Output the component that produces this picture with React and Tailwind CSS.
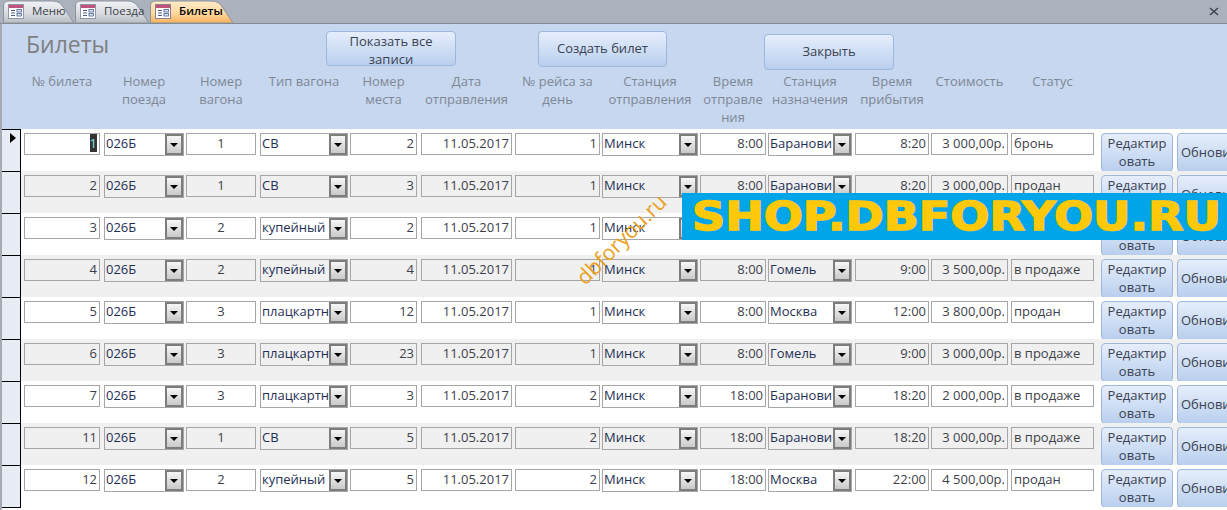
const font = { fontFamily: '"Open Sans", "Noto Sans", sans-serif' };

const rows = [
  ['1', '1', 'СВ', '2', '1', 'Минск', '8:00', 'Барановичи', '8:20', '3 000,00р.', 'бронь'],
  ['2', '1', 'СВ', '3', '1', 'Минск', '8:00', 'Барановичи', '8:20', '3 000,00р.', 'продан'],
  ['3', '2', 'купейный', '2', '1', 'Минск', '8:00', 'Барановичи', '8:20', '3 500,00р.', 'продан'],
  ['4', '2', 'купейный', '4', '1', 'Минск', '8:00', 'Гомель', '9:00', '3 500,00р.', 'в продаже'],
  ['5', '3', 'плацкартный', '12', '1', 'Минск', '8:00', 'Москва', '12:00', '3 800,00р.', 'продан'],
  ['6', '3', 'плацкартный', '23', '1', 'Минск', '8:00', 'Гомель', '9:00', '3 000,00р.', 'в продаже'],
  ['7', '3', 'плацкартный', '3', '2', 'Минск', '18:00', 'Барановичи', '18:20', '2 000,00р.', 'в продаже'],
  ['11', '1', 'СВ', '5', '2', 'Минск', '18:00', 'Барановичи', '18:20', '3 000,00р.', 'в продаже'],
  ['12', '2', 'купейный', '5', '2', 'Минск', '18:00', 'Москва', '22:00', '4 500,00р.', 'продан'],
];

const gridCols = 'grid grid-cols-[80px_82px_74px_90px_71px_94px_87px_98px_68px_87px_76px_80px_90px_76px_72px]';

function FormIcon({ active }) {
  return (
    <svg width="16" height="15" viewBox="0 0 16 15" className="shrink-0">
      <rect x="0.5" y="0.5" width="15" height="14" fill="#fff" stroke={active ? '#8a7f8f' : '#8f98aa'} />
      <rect x="1" y="1" width="14" height="3" fill="#c2527a" />
      <path d="M3 6.5h4M3 9h4M3 11.5h4" stroke="#4a5f8f" />
      <rect x="9" y="5.5" width="4.5" height="2.5" fill="#dfe6f3" stroke="#4a5f8f" strokeWidth="0.8" />
      <rect x="9" y="9.5" width="4.5" height="2.5" fill="#dfe6f3" stroke="#4a5f8f" strokeWidth="0.8" />
    </svg>
  );
}

function Tab({ label, width, active }) {
  const d = `M0.5 23V6Q0.5 1 6 1H${width - 22}Q${width - 15} 1 ${width - 11} 8L${width - 1} 23Z`;
  return (
    <div className="relative h-[23px] flex items-center pl-[5px]" style={{ width }}>
      <svg width={width} height="23" className="absolute left-0 top-0">
        <defs>
          <linearGradient id={'tab' + width} x1="0" y1="0" x2="0" y2="1">
            <stop offset="0" stopColor={active ? '#fdebc8' : '#f0f2f5'} />
            <stop offset="0.55" stopColor={active ? '#fdd9a0' : '#d9dce1'} />
            <stop offset="1" stopColor={active ? '#f8b25a' : '#b9bdc4'} />
          </linearGradient>
        </defs>
        <path d={d} fill={`url(#tab${width})`} stroke="#8d929a" />
      </svg>
      <div className="relative flex items-center gap-[8px] pb-[1px]">
        <FormIcon active={active} />
        <span className={active ? 'text-[11.5px] font-semibold text-black' : 'text-[11.5px] text-[#3b3f46]'}>{label}</span>
      </div>
    </div>
  );
}

function AccessButton({ children, className }) {
  return (
    <div className={`rounded-[4px] border border-[#9db8dc] bg-gradient-to-b from-[#e6eefb] to-[#b9cfee] text-[13px] leading-[18px] text-[#3b4252] text-center flex items-center justify-center shrink-0 ${className}`}>
      {children}
    </div>
  );
}

function Field({ value, width, align, alt, children }) {
  return (
    <div
      style={{ width }}
      className={`h-[22px] border border-[#a6a6a6] ${alt ? 'bg-[#f0f0f0]' : 'bg-white'} ${align} text-[13px] leading-[18px] px-[2px] text-[#3d3f4a] overflow-hidden whitespace-nowrap`}
    >
      {children || value}
    </div>
  );
}

function Combo({ value, width, alt }) {
  return (
    <div
      style={{ width }}
      className={`relative h-[23px] border border-[#a6a6a6] ${alt ? 'bg-[#f0f0f0]' : 'bg-white'} text-[13px] leading-[18px] pl-[1px] text-[#1f2f55] overflow-hidden whitespace-nowrap`}
    >
      {value}
      <div className="absolute right-0 top-0 bottom-0 w-[18px] border-2 border-[#7c7c7c] bg-gradient-to-b from-[#f7f7f7] to-[#c9c9c9] flex items-center justify-center">
        <div className="w-0 h-0 border-l-[4px] border-r-[4px] border-t-[4px] border-l-transparent border-r-transparent border-t-black" />
      </div>
    </div>
  );
}

function Label({ children, width }) {
  return (
    <div style={{ width }} className="text-center text-[13px] leading-[18px] text-[#7f8796]">
      {children}
    </div>
  );
}

function Row({ data, index }) {
  const alt = index % 2 === 1;
  const [id, wagon, type, seat, flight, from, dep, to, arr, cost, status] = data;
  return (
    <div className="flex h-[42px]">
      <div className="relative w-[19px] shrink-0 bg-[#e8edf5] border-t border-r border-black">
        {index === 0 && (
          <div className="absolute left-[8px] top-[3px] w-0 h-0 border-t-[5px] border-b-[5px] border-l-[6px] border-t-transparent border-b-transparent border-l-black" />
        )}
      </div>
      <div className={`flex-1 min-w-0 pl-[3px] pt-[4px] overflow-hidden ${alt ? 'bg-[#f0f0f0]' : 'bg-white'} ${gridCols}`}>
        <Field width={76} align="text-right" alt={alt}>
          {index === 0 ? <span className="inline-block h-[18px] bg-[#333] text-[#7fe8f0]">1</span> : id}
        </Field>
        <Combo width={80} value="026Б" alt={alt} />
        <Field width={70} align="text-center" value={wagon} alt={alt} />
        <Combo width={88} value={type} alt={alt} />
        <Field width={67} align="text-right" value={seat} alt={alt} />
        <Field width={91} align="text-right" value="11.05.2017" alt={alt} />
        <Field width={85} align="text-right" value={flight} alt={alt} />
        <Combo width={96} value={from} alt={alt} />
        <Field width={66} align="text-right" value={dep} alt={alt} />
        <Combo width={84} value={to} alt={alt} />
        <Field width={74} align="text-right" value={arr} alt={alt} />
        <Field width={77} align="text-right" value={cost} alt={alt} />
        <Field width={83} align="text-left" value={status} alt={alt} />
        <AccessButton className="w-[72px] h-[39px] pb-[2px]">Редактир<br />овать</AccessButton>
        <AccessButton className="w-[72px] h-[39px] pb-[2px] !justify-start pl-[3px] whitespace-nowrap overflow-hidden">Обновить</AccessButton>
      </div>
    </div>
  );
}

export default function App() {
  return (
    <div style={font} className="relative w-[1227px] h-[510px] overflow-hidden bg-white">
      {/* tabs */}
      <div className="relative h-[24px] bg-[#abb2bd] border-b border-[#858b93] flex items-start pl-[3px]">
        <div className="flex">
          <Tab label="Меню" width={72} />
          <Tab label="Поезда" width={75} />
          <Tab label="Билеты" width={84} active />
        </div>
        <svg width="10" height="9" viewBox="0 0 10 9" className="absolute left-[1209px] top-[7px]">
          <path d="M1 1l8 7M9 1L1 8" stroke="#3f4650" strokeWidth="1.6" />
        </svg>
      </div>

      <div className="flex h-[486px]">
        <div className="w-[2px] shrink-0 bg-[#a6abb3]" />
        <div className="flex-1 min-w-0">
          {/* form header */}
          <div className="h-[105px] bg-[#c6d7ef] flex flex-col">
            <div className="h-[48px] flex items-start">
              <div className="w-[324px] pl-[24px] pt-[5px] text-[23px] leading-[30px] text-[#7f7f7f] shrink-0">Билеты</div>
              <AccessButton className="w-[130px] h-[35px] mt-[7px] pt-[2px]">Показать все<br />записи</AccessButton>
              <AccessButton className="w-[129px] h-[36px] mt-[7px] ml-[82px] pb-[2px]">Создать билет</AccessButton>
              <AccessButton className="w-[130px] h-[36px] mt-[10px] ml-[97px] pb-[2px]">Закрыть</AccessButton>
            </div>
            <div className={`pl-[22px] ${gridCols}`}>
              <Label width={76}>№ билета</Label>
              <Label width={80}>Номер<br />поезда</Label>
              <Label width={70}>Номер<br />вагона</Label>
              <Label width={88}>Тип вагона</Label>
              <Label width={67}>Номер<br />места</Label>
              <Label width={91}>Дата<br />отправления</Label>
              <Label width={85}>№ рейса за<br />день</Label>
              <Label width={96}>Станция<br />отправления</Label>
              <Label width={66}>Время<br />отправле<br />ния</Label>
              <Label width={84}>Станция<br />назначения</Label>
              <Label width={74}>Время<br />прибытия</Label>
              <Label width={77}>Стоимость</Label>
              <Label width={83}>Статус</Label>
            </div>
          </div>
          {rows.map((row, i) => (
            <Row key={i} data={row} index={i} />
          ))}
          <div className="w-[19px] border-t border-black" />
        </div>
      </div>

      {/* watermarks */}
      <div className="absolute left-[682px] top-[193px] w-[545px] h-[47px] bg-[#00a4e8] flex items-center overflow-hidden">
        <span className="ml-[10px] origin-left scale-x-[1.18] whitespace-nowrap text-[39px] font-bold leading-none text-[#ffc80a] [-webkit-text-stroke:1.5px_#ffc80a]" style={{ fontFamily: '"DejaVu Sans", sans-serif' }}>
          SHOP.DBFORYOU.RU
        </span>
      </div>
      <div className="absolute left-[561px] top-[225px] w-[120px] text-center text-[21px] leading-[28px] whitespace-nowrap text-[#e8a020] -rotate-45">
        dbforyou.ru
      </div>
    </div>
  );
}
